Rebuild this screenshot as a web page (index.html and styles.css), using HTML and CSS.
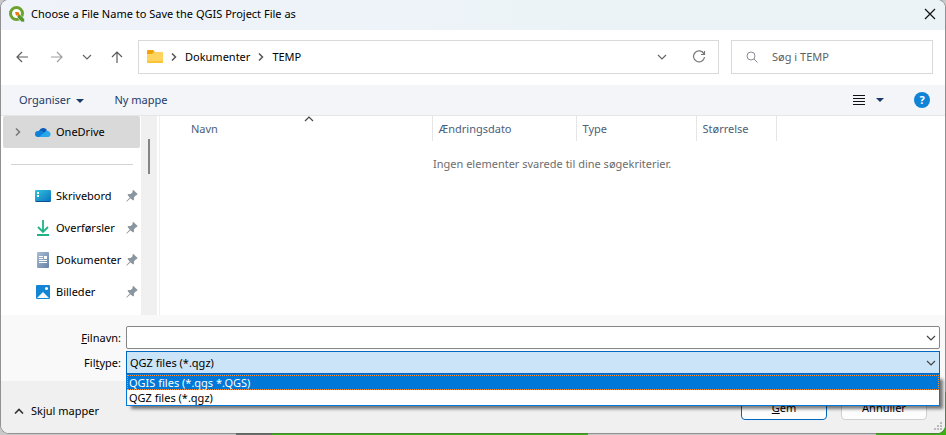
FILE: index.html
```html
<!DOCTYPE html>
<html lang="da">

<head>
    <meta charset="UTF-8">
    <meta name="viewport" content="width=device-width, initial-scale=1.0">
    <title>Choose a File Name to Save the QGIS Project File as</title>
    <link rel="stylesheet" href="styles.css">
</head>

<body>
    <!-- shared icons -->
    <svg class="sprite" aria-hidden="true">
        <symbol id="chevron-down" viewBox="0 0 10 6">
            <path d="M1 1l4 4 4-4" fill="none" stroke="currentColor" stroke-width="1.2" />
        </symbol>
        <symbol id="chevron-right" viewBox="0 0 6 8">
            <path d="M1 .5L4.500 4 1 7.500" fill="none" stroke="currentColor" stroke-width="1.5" />
        </symbol>
        <symbol id="caret" viewBox="0 0 8 4">
            <path d="M0 0h8l-4 4z" fill="currentColor" />
        </symbol>
        <symbol id="pin" viewBox="0 0 12 12">
            <path d="M6.500 0.500L7.500 0l4 4-.5 1-1 .3-2 2V9.500L7 10.500 4.500 8.200 1 11.500H.5V11l3.300-3.500L1.500 5l1-1h2.200l2-2z" fill="#8a959e" />
        </symbol>
    </svg>

    <form class="dialog" onsubmit="return false">
        <header class="titlebar">
            <svg width="16" height="16" viewBox="0 0 16 16">
                <circle cx="7.500" cy="7.500" r="6" fill="#fff" stroke="#6ba32d" stroke-width="3" />
                <path d="M9 8.500l1.500-.5 5 5v3h-3L8 11z" fill="#589632" stroke="#f0f3fa" stroke-width=".6" />
                <path d="M6 6h3.500l1 3.500L7 9.500z" fill="#ee7913" />
            </svg>
            <h1>Choose a File Name to Save the QGIS Project File as</h1>
            <button type="button" class="icon-btn" aria-label="Luk">
                <svg width="12" height="12" viewBox="0 0 12 12"><path d="M1 1l10 10M11 1L1 11" stroke="#111" stroke-width="1.2" /></svg>
            </button>
        </header>

        <div class="navbar">
            <div class="arrows">
                <button type="button" class="icon-btn" aria-label="Tilbage">
                    <svg width="12" height="12" viewBox="0 0 12 12"><path d="M12 6H1M6 1L1 6l5 5" fill="none" stroke="#5c5c5c" stroke-width="1.2" /></svg>
                </button>
                <button type="button" class="icon-btn forward" aria-label="Frem">
                    <svg width="12" height="12" viewBox="0 0 12 12"><path d="M0 6h11M6 1l5 5-5 5" fill="none" stroke="#a0a0a0" stroke-width="1.2" /></svg>
                </button>
                <button type="button" class="icon-btn" aria-label="Seneste">
                    <svg width="10" height="6"><use href="#chevron-down" /></svg>
                </button>
                <button type="button" class="icon-btn" aria-label="Op">
                    <svg width="12" height="12" viewBox="0 0 12 12"><path d="M6 12V1M1 6l5-5 5 5" fill="none" stroke="#5c5c5c" stroke-width="1.2" /></svg>
                </button>
            </div>
            <nav class="address">
                <svg class="folder" width="16" height="14" viewBox="0 0 16 14">
                    <path d="M0 1q0-1 1-1h5l2 2h-1v3H0z" fill="#f0a30a" />
                    <path d="M0 4h5l2-2h8q1 0 1 1v9q0 1-1 1H1q-1 0-1-1z" fill="#ffd45e" />
                    <path d="M0 11v1q0 1 1 1h14q1 0 1-1v-1z" fill="#fbc336" />
                </svg>
                <svg class="sep" width="6" height="8"><use href="#chevron-right" /></svg>
                <a href="#">Dokumenter</a>
                <svg class="sep" width="6" height="8"><use href="#chevron-right" /></svg>
                <a href="#">TEMP</a>
                <button type="button" class="icon-btn history" aria-label="Tidligere placeringer">
                    <svg width="10" height="6"><use href="#chevron-down" /></svg>
                </button>
                <button type="button" class="icon-btn" aria-label="Opdater">
                    <svg width="14" height="14" viewBox="0 0 14 14"><path d="M12 4A5.500 5.500 0 1 0 12.500 7M12.500 1v3.500H9" fill="none" stroke="#777" stroke-width="1.2" /></svg>
                </button>
            </nav>
            <div class="search">
                <svg width="12" height="12" viewBox="0 0 12 12"><circle cx="5" cy="5" r="4" fill="none" stroke="#888d99" /><path d="M8 8l3.500 3.500" stroke="#888d99" /></svg>
                <input type="text" placeholder="Søg i TEMP" aria-label="Søg i TEMP">
            </div>
        </div>

        <div class="toolbar">
            <button type="button" class="tool">Organiser <svg width="8" height="4"><use href="#caret" /></svg></button>
            <button type="button" class="tool">Ny mappe</button>
            <button type="button" class="icon-btn view" aria-label="Visning">
                <svg width="12" height="11" viewBox="0 0 12 11"><path d="M0 .5h12M0 3.500h12M0 6.500h12M0 9.500h12" stroke="#111" /></svg>
            </button>
            <button type="button" class="icon-btn view-menu" aria-label="Flere visninger"><svg width="8" height="4"><use href="#caret" /></svg></button>
            <button type="button" class="help" aria-label="Hjælp">?</button>
        </div>

        <div class="browser">
            <aside class="sidebar">
                <ul>
                    <li class="selected">
                        <svg class="expand" width="6" height="8"><use href="#chevron-right" /></svg>
                        <svg width="16" height="16" viewBox="0 0 16 16">
                            <path d="M4 7a4.500 4.500 0 0 1 8-1l-3 4-6 2z" fill="#0a5cb8" />
                            <path d="M3 13a3 3 0 0 1 0-6q2-1 4 0l4 3-4 3z" fill="#1080d8" />
                            <path d="M4 13l6-5q2-2 4-.5A3 3 0 0 1 13.500 13z" fill="#28a8ea" />
                        </svg>
                        <a href="#">OneDrive</a>
                    </li>
                    <li class="divider"></li>
                    <li>
                        <svg width="16" height="16" viewBox="0 0 16 16">
                            <defs><linearGradient id="desk" x2="1" y2="1"><stop stop-color="#2fc6dd" /><stop offset="1" stop-color="#0b6fc0" /></linearGradient></defs>
                            <rect y="2" width="16" height="12" rx="1" fill="url(#desk)" />
                            <path d="M2 4h2v2H2zM2 7h2v2H2z" fill="#fff" />
                            <path d="M1 13.500h14" stroke="#0a4f8e" />
                        </svg>
                        <a href="#">Skrivebord</a>
                        <svg class="pin" width="12" height="12"><use href="#pin" /></svg>
                    </li>
                    <li>
                        <svg width="16" height="16" viewBox="0 0 16 16"><path d="M8 0v12M3 7l5 5 5-5M2 15h12" fill="none" stroke="#1eb385" stroke-width="1.8" /></svg>
                        <a href="#">Overførsler</a>
                        <svg class="pin" width="12" height="12"><use href="#pin" /></svg>
                    </li>
                    <li>
                        <svg width="16" height="16" viewBox="0 0 16 16">
                            <defs><linearGradient id="doc" x2="1" y2="1"><stop stop-color="#a9bdd4" /><stop offset="1" stop-color="#6583a8" /></linearGradient></defs>
                            <rect x="2" width="12" height="16" rx="1" fill="url(#doc)" />
                            <path d="M4 4.500h4M4 6.500h4M4 8.500h8M4 10.500h8" stroke="#fff" />
                            <path d="M9 4h3v3H9z" fill="#fff" />
                        </svg>
                        <a href="#">Dokumenter</a>
                        <svg class="pin" width="12" height="12"><use href="#pin" /></svg>
                    </li>
                    <li>
                        <svg width="16" height="16" viewBox="0 0 16 16">
                            <rect x="1" y="1" width="14" height="14" rx="1" fill="#1484d4" />
                            <path d="M2 14l6-6 6 6z" fill="#f2f8fd" />
                            <circle cx="11.500" cy="4.500" r="1.500" fill="#fff" />
                        </svg>
                        <a href="#">Billeder</a>
                        <svg class="pin" width="12" height="12"><use href="#pin" /></svg>
                    </li>
                </ul>
                <div class="scrollbar"><div class="thumb"></div></div>
            </aside>
            <main class="files">
                <svg class="sort" width="10" height="6" viewBox="0 0 10 6"><path d="M1 5l4-4 4 4" fill="none" stroke="#444" stroke-width="1.2" /></svg>
                <table>
                    <thead>
                        <tr><th class="name">Navn</th><th class="date">Ændringsdato</th><th class="type">Type</th><th class="size">Størrelse</th><td></td></tr>
                    </thead>
                    <tbody>
                        <tr><td colspan="5" class="empty">Ingen elementer svarede til dine søgekriterier.</td></tr>
                    </tbody>
                </table>
            </main>
        </div>

        <div class="fields">
            <label for="filename"><u>F</u>ilnavn:</label>
            <div class="combo">
                <input type="text" id="filename">
                <svg width="10" height="6"><use href="#chevron-down" /></svg>
            </div>
            <label for="filetype">Fil<u>t</u>ype:</label>
            <div class="combo open">
                <select id="filetype">
                    <option>QGIS files (*.qgs *.QGS)</option>
                    <option selected>QGZ files (*.qgz)</option>
                </select>
                <svg width="10" height="6"><use href="#chevron-down" /></svg>
                <ul class="options" role="listbox" aria-label="Filtype">
                    <li role="option" class="active" aria-selected="true">QGIS files (*.qgs *.QGS)</li>
                    <li role="option" aria-selected="false">QGZ files (*.qgz)</li>
                </ul>
            </div>
        </div>

        <footer class="footer">
            <button type="button" class="hide-folders">
                <svg width="10" height="6" viewBox="0 0 10 6"><path d="M1 5.500l4-4 4 4" fill="none" stroke="#333" stroke-width="1.600" /></svg>
                Skjul mapper
            </button>
            <button type="submit" class="btn primary"><u>G</u>em</button>
            <button type="button" class="btn">Annuller</button>
            <svg class="grip" width="9" height="9" viewBox="0 0 9 9"><path d="M6 0h2v2H6zM3 3h2v2H3zM6 3h2v2H6zM0 6h2v2H0zM3 6h2v2H3zM6 6h2v2H6z" fill="#bbb" /></svg>
        </footer>
    </form>
</body>

</html>
```

FILE: styles.css
```css
* {
    box-sizing: border-box;
}

body {
    margin: 0;
    padding: 0 1px 2px;
    height: 100vh;
    overflow: hidden;
    /* strip of the map window showing under the dialog */
    background: linear-gradient(to right, #c9c9c9 236px, #66706a 236px, #66706a 272px, #3cb013 272px, #3cb013 588px, #c9c9c9 588px, #c9c9c9 876px, #3cb013 876px) bottom / 100% 43px no-repeat #c9c9c9;
    font-family: "Noto Sans", "Open Sans", sans-serif;
    font-size: 11px;
    line-height: 16px;
    color: #000;
}

button,
input,
select {
    font: inherit;
    color: inherit;
}

a {
    color: inherit;
    text-decoration: none;
}

ul {
    list-style: none;
    margin: 0;
    padding: 0;
}

svg {
    flex-shrink: 0;
}

.sprite {
    display: none;
}

.dialog {
    display: flex;
    flex-direction: column;
    height: 100%;
    border-radius: 8px;
    background-color: #fff;
    box-shadow: 0 0 0 1px rgba(90, 90, 90, 0.5);
    overflow: hidden;
}

.icon-btn {
    display: flex;
    align-items: center;
    justify-content: center;
    border: none;
    background: none;
    padding: 0;
    color: #666;
}

/* Title bar */
.titlebar {
    display: flex;
    align-items: center;
    height: 30px;
    padding: 0 9px 2px 8px;
    background: linear-gradient(to right, #f0f3fa, #ecf3f7 60%);
}

.titlebar h1 {
    flex: 1;
    margin: 0 0 0 6px;
    font-size: 11px;
    font-weight: normal;
}

/* Address and search */
.navbar {
    display: flex;
    height: 55px;
    padding: 10px 12px 11px 15px;
}

.arrows {
    display: flex;
    align-items: center;
    gap: 19px;
    width: 122px;
}

.arrows .forward {
    margin-left: 4px;
}

.address,
.search {
    display: flex;
    align-items: center;
    border: 1px solid #d9d9d9;
}

.address {
    flex: 1;
    padding: 0 12px 0 8px;
    margin-right: 12px;
}

.address .sep {
    margin: 0 8px;
    color: #555;
}

.address .history {
    margin-left: auto;
    margin-right: 25px;
}

.search {
    width: 202px;
    padding: 0 14px;
    gap: 14px;
}

.search input {
    flex: 1;
    min-width: 0;
    border: none;
    outline: none;
    padding: 0;
    background: none;
}

.search input::placeholder {
    color: #5f5f5f;
}

/* Toolbar */
.toolbar {
    display: flex;
    align-items: center;
    height: 31px;
    padding: 0 15px 0 18px;
    background-color: #f4f5f8;
    border-bottom: 1px solid #e6e6e8;
}

.tool {
    border: none;
    background: none;
    padding: 0;
    margin-right: 30px;
    color: #1c3a68;
}

.tool svg {
    margin-left: 3px;
    vertical-align: middle;
}

.view {
    margin-left: auto;
}

.view-menu {
    margin: 0 30px 0 11px;
    color: #1c3a68;
}

.help {
    width: 16px;
    height: 16px;
    padding: 0;
    border: none;
    border-radius: 50%;
    background-color: #0f83d6;
    color: #fff;
    font-weight: bold;
}

/* Folder tree and file list */
.browser {
    display: flex;
    flex: 1;
    min-height: 0;
}

.sidebar {
    display: flex;
    width: 159px;
    border-right: 1px solid #f0f0f0;
}

.sidebar ul {
    flex: 1;
    min-width: 0;
    padding-left: 2px;
}

.sidebar li {
    display: flex;
    align-items: center;
    gap: 5px;
    height: 32px;
    padding: 0 3px 0 32px;
    border-radius: 2px;
}

.sidebar .selected {
    padding-left: 12px;
    margin-right: 1px;
    background-color: #d9d9d9;
}

.sidebar .expand {
    margin-right: 9px;
    color: #777;
}

.sidebar .divider {
    padding: 0 8px;
}

.sidebar .divider::before {
    content: "";
    flex: 1;
    border-top: 1px solid #d4d4d4;
}

.sidebar .pin {
    margin-left: auto;
}

.scrollbar {
    width: 16px;
    margin-right: 2px;
    padding: 23px 7px 0;
    background-color: #f0f0f0;
}

.thumb {
    width: 2px;
    height: 35px;
    background-color: #858585;
}

.files {
    flex: 1;
    position: relative;
}

.files table {
    width: 100%;
    border-collapse: collapse;
    table-layout: fixed;
}

.files th {
    height: 25px;
    padding: 0 0 0 6px;
    border-right: 1px solid #e5e5e5;
    text-align: left;
    font-weight: normal;
    color: #4c607a;
}

.files .name {
    width: 272px;
    padding-left: 31px;
}

.files .date {
    width: 144px;
}

.files .type {
    width: 120px;
}

.files .size {
    width: 80px;
}

.files .empty {
    padding: 15px 0 0 273px;
    color: #6d6d6d;
}

/* sort marker sits over the Navn heading */
.sort {
    position: absolute;
    top: 0;
    left: 144px;
}

/* File name and type */
.fields {
    display: grid;
    grid-template-columns: 120px 1fr;
    column-gap: 5px;
    row-gap: 2px;
    padding: 11px 5px 7px 0;
    background-color: #f9f9f9;
}

.fields label {
    align-self: center;
    text-align: right;
}

.combo {
    display: flex;
    position: relative;
    height: 23px;
    border: 1px solid #868686;
    border-radius: 2px;
    background-color: #fff;
}

.combo input,
.combo select {
    flex: 1;
    min-width: 0;
    border: none;
    outline: none;
    padding: 0 3px;
    background: none;
    appearance: none;
}

.combo > svg {
    position: absolute;
    right: 3px;
    top: 8px;
    color: #444;
    pointer-events: none;
}

.combo.open {
    border-color: #0067c0;
    border-radius: 0;
    background-color: #cce4f7;
}

/* open drop-down list */
.options {
    position: absolute;
    top: 22px;
    left: -1px;
    right: -1px;
    z-index: 1;
    border: 1px solid #0078d7;
    background-color: #fff;
    box-shadow: 4px 4px 3px -1px rgba(0, 0, 0, 0.5);
}

.options li {
    height: 15px;
    padding: 0 2px;
    line-height: 15px;
}

.options .active {
    background-color: #0078d7;
    color: #fff;
    outline: 1px dotted #f59342;
    outline-offset: -1px;
}

/* Footer */
.footer {
    display: flex;
    align-items: flex-start;
    position: relative;
    height: 52px;
    padding: 14px 18px 0 13px;
    gap: 14px;
    background-color: #f0f0f0;
}

.hide-folders {
    display: flex;
    align-items: center;
    gap: 7px;
    margin: 8px auto 0 0;
    padding: 0;
    border: none;
    background: none;
}

.btn {
    width: 86px;
    height: 25px;
    padding: 0;
    border: 1px solid #d0d0d0;
    border-radius: 4px;
    background-color: #fdfdfd;
}

.btn.primary {
    border-color: #0067c0;
}

.grip {
    position: absolute;
    right: 2px;
    bottom: 2px;
}
```
